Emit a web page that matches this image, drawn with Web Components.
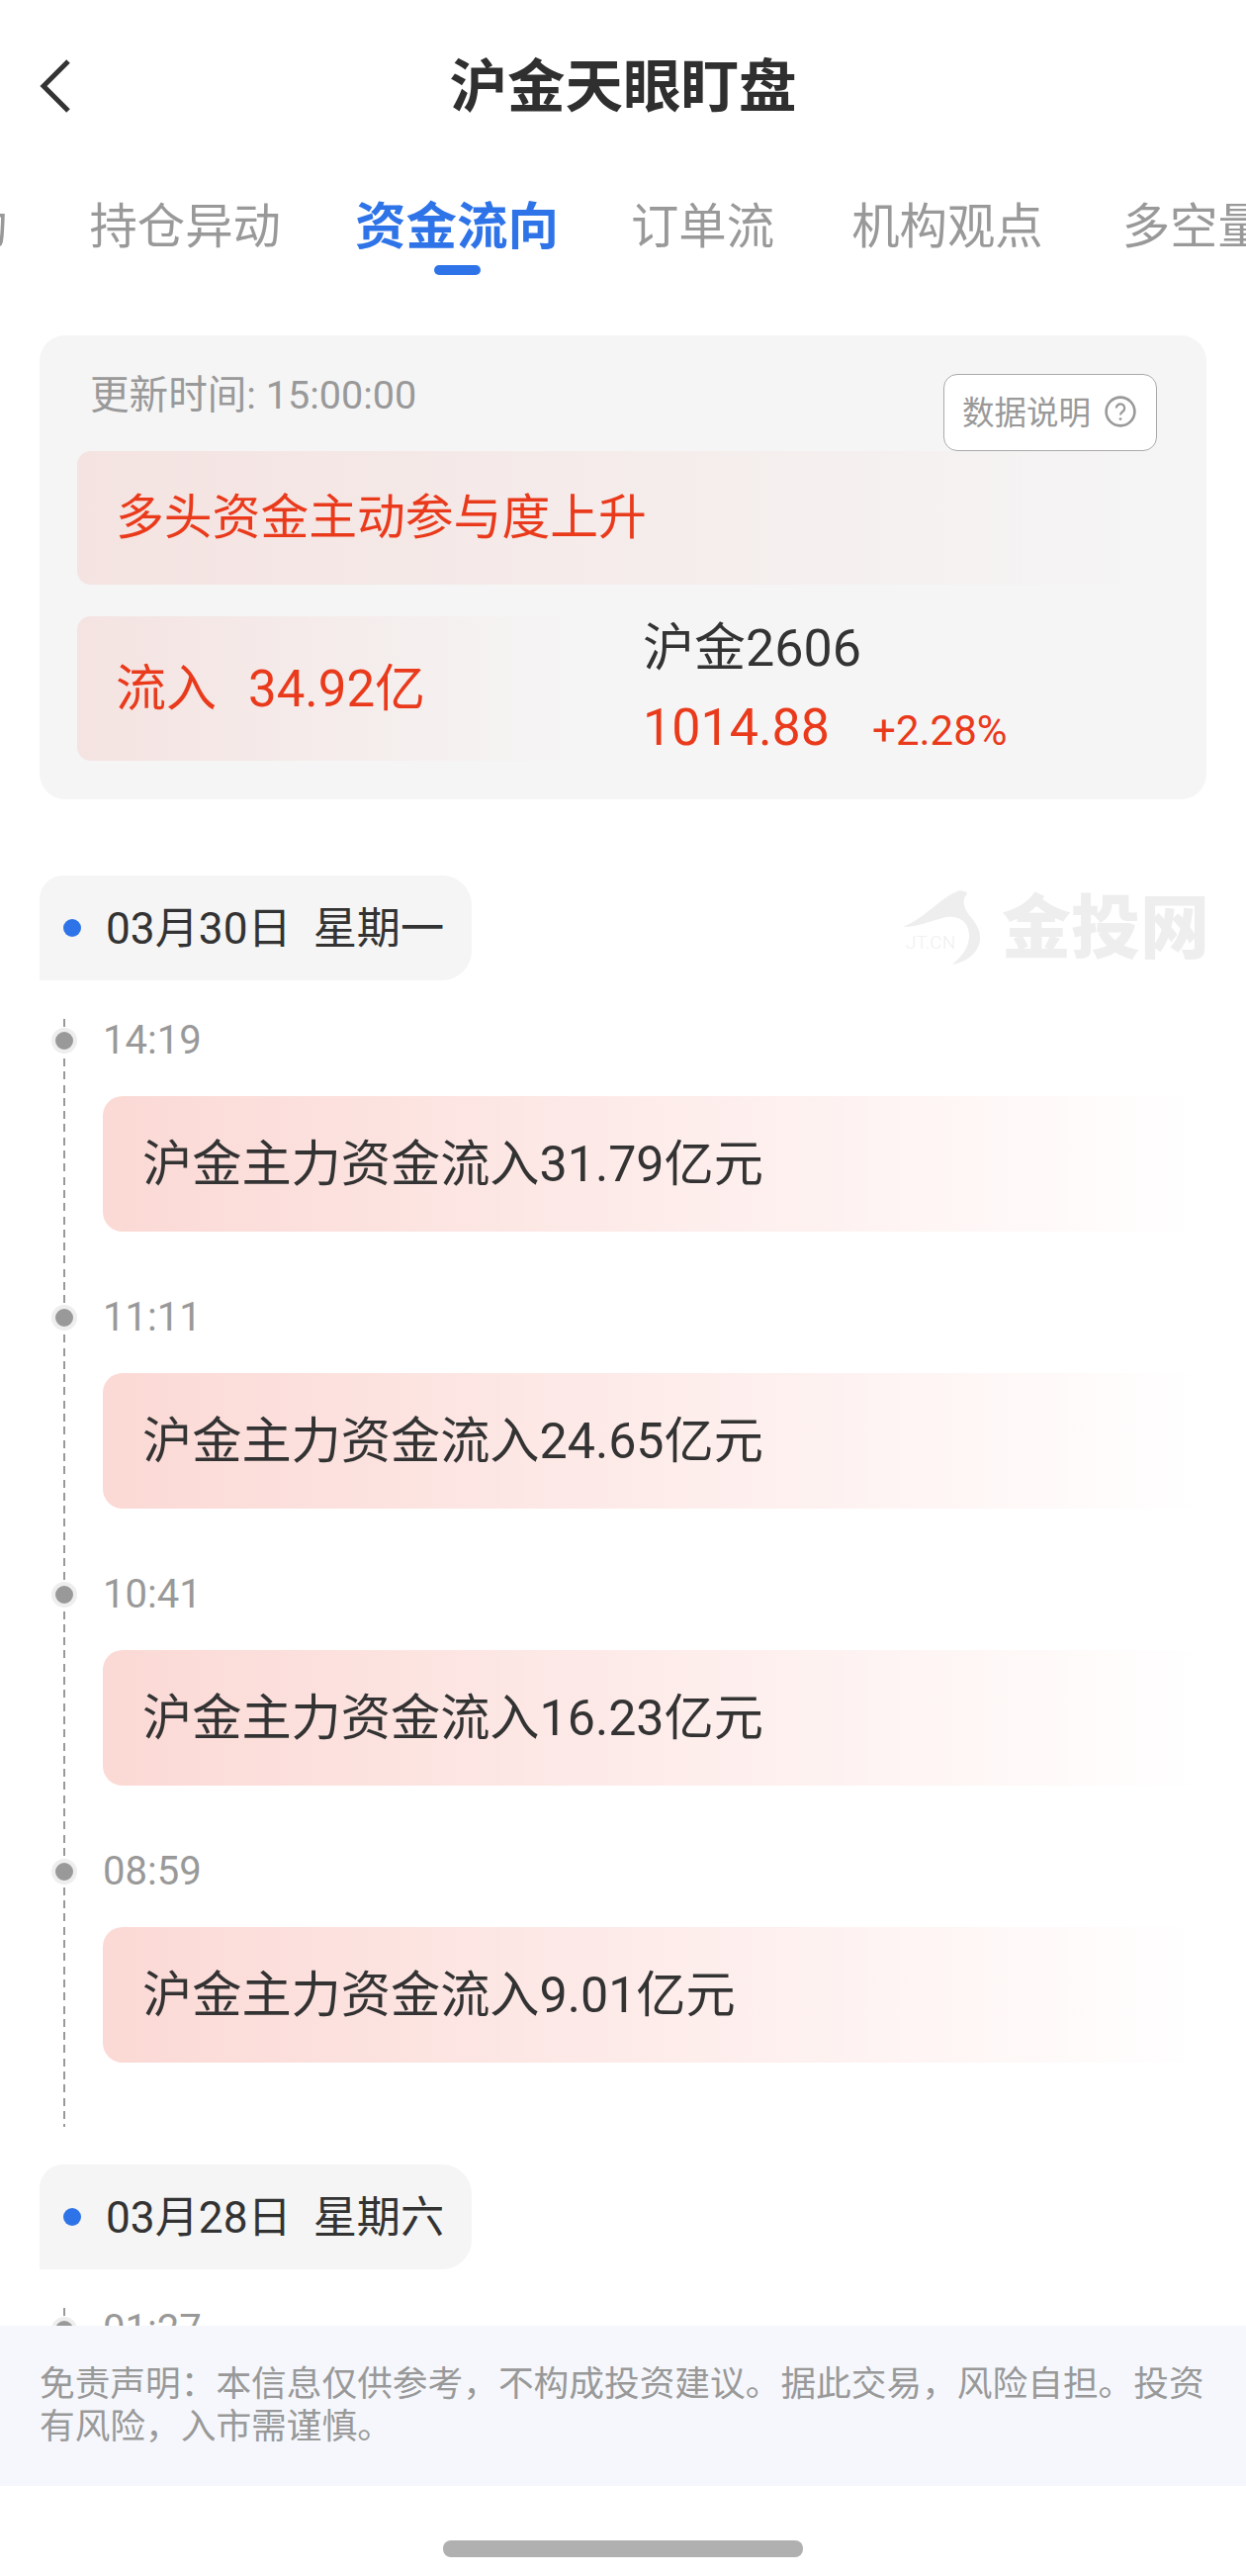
<!DOCTYPE html>
<html lang="zh-CN">
<head>
<meta charset="utf-8">
<title>沪金天眼盯盘</title>
<style>
  html, body { margin: 0; padding: 0; background: #fff; }
  body { font-family: Roboto, "Noto Sans CJK SC", sans-serif; color: #333; }
</style>
</head>
<body>
<app-shell>
  <page-header>沪金天眼盯盘</page-header>
  <tab-strip>
    <tab-item style="margin-left:-41px">动</tab-item>
    <tab-item style="margin-left:83px">持仓异动</tab-item>
    <tab-item active style="margin-left:75px">资金流向</tab-item>
    <tab-item style="margin-left:73px">订单流</tab-item>
    <tab-item style="margin-left:78px">机构观点</tab-item>
    <tab-item style="margin-left:80px">多空量</tab-item>
  </tab-strip>
  <flow-feed>
    <summary-card></summary-card>
    <jt-watermark></jt-watermark>
    <date-pill>03月30日&nbsp; 星期一</date-pill>
    <flow-group>
      <flow-entry time="14:19">沪金主力资金流入31.79亿元</flow-entry>
      <flow-entry time="11:11">沪金主力资金流入24.65亿元</flow-entry>
      <flow-entry time="10:41">沪金主力资金流入16.23亿元</flow-entry>
      <flow-entry time="08:59">沪金主力资金流入9.01亿元</flow-entry>
    </flow-group>
    <date-pill>03月28日&nbsp; 星期六</date-pill>
    <flow-group>
      <flow-entry time="01:27"></flow-entry>
    </flow-group>
  </flow-feed>
  <disclaimer-bar>免责声明&#xFF1A;本信息仅供参考&#xFF0C;不构成投资建议。据此交易&#xFF0C;风险自担。投资有风险&#xFF0C;入市需谨慎。</disclaimer-bar>
  <home-bar></home-bar>
</app-shell>

<script>
  class AppShell extends HTMLElement {
    constructor() {
      super();
      this.attachShadow({mode: 'open'}).innerHTML = `
        <style>
          :host {
            display: flex;
            flex-direction: column;
            width: 1260px;
            height: 2604px;
            overflow: hidden;
            background: #fff;
          }
        </style>
        <slot></slot>
      `;
    }
  }

  class PageHeader extends HTMLElement {
    constructor() {
      super();
      this.attachShadow({mode: 'open'}).innerHTML = `
        <style>
          :host {
            display: grid;
            grid-template-columns: 1fr auto 1fr;
            align-items: center;
            height: 174px;
            flex: none;
          }
          svg { display: block; margin-left: 40px; }
          h1 {
            margin: 2px 0 0;
            font-size: 58.5px;
            line-height: 70px;
            font-weight: 700;
            color: #2f2f2f;
          }
        </style>
        <svg width="34" height="56" viewBox="0 0 34 56" fill="none">
          <path d="M29 3 L4 28 L29 53" stroke="#333" stroke-width="5"/>
        </svg>
        <h1><slot></slot></h1>
        <span></span>
      `;
    }
  }

  class TabStrip extends HTMLElement {
    constructor() {
      super();
      this.attachShadow({mode: 'open'}).innerHTML = `
        <style>
          :host {
            display: flex;
            flex: none;
            height: 165px;
            align-items: flex-start;
            overflow: hidden;
            white-space: nowrap;
          }
        </style>
        <slot></slot>
      `;
    }
  }

  class TabItem extends HTMLElement {
    constructor() {
      super();
      this.attachShadow({mode: 'open'}).innerHTML = `
        <style>
          :host {
            display: block;
            flex: none;
            position: relative;
            height: 102px;
            padding-top: 26px;
            font-size: 48.4px;
            line-height: 60px;
            color: #999;
          }
          :host([active]) {
            font-size: 51.5px;
            font-weight: 700;
            color: #2e74e8;
          }
          :host([active])::after {
            content: "";
            position: absolute;
            left: 50%;
            top: 94px;
            width: 47px;
            height: 10px;
            margin-left: -23px;
            border-radius: 5px;
            background: #2e74e8;
          }
        </style>
        <slot></slot>
      `;
    }
  }

  class FlowFeed extends HTMLElement {
    constructor() {
      super();
      this.attachShadow({mode: 'open'}).innerHTML = `
        <style>
          :host {
            display: block;
            position: relative;
            flex: 1;
            min-height: 0;
            overflow: hidden;
            padding: 0 40px;
          }
        </style>
        <slot></slot>
      `;
    }
  }

  class SummaryCard extends HTMLElement {
    constructor() {
      super();
      this.attachShadow({mode: 'open'}).innerHTML = `
        <style>
          :host {
            display: block;
            box-sizing: border-box;
            height: 469px;
            padding: 0 38px 39px;
            border-radius: 26px;
            background: #f5f5f5;
          }
          .head {
            display: flex;
            justify-content: space-between;
            align-items: flex-start;
            height: 117px;
            padding: 0 12px 0 13px;
          }
          .updated {
            margin-top: 41px;
            font-size: 39.6px;
            line-height: 40px;
            color: #999;
          }
          .help {
            display: flex;
            align-items: center;
            gap: 14px;
            box-sizing: border-box;
            width: 216px;
            height: 78px;
            margin-top: 39px;
            padding: 0 0 2px 18px;
            border: 1.5px solid #aaa;
            border-radius: 14px;
            background: #fff;
            font-size: 32.5px;
            color: #999;
          }
          .help span { margin-bottom: 3px; }
          .help svg { display: block; flex: none; }
          .signal {
            display: flex;
            align-items: center;
            box-sizing: border-box;
            height: 135px;
            padding: 0 0 10px 39px;
            border-radius: 14px;
            background: linear-gradient(90deg, #f4e3e1, rgba(244, 227, 225, 0));
            font-size: 48.8px;
            color: #ea3a1c;
          }
          .row {
            display: flex;
            height: 146px;
            margin-top: 32px;
          }
          .inflow {
            display: flex;
            align-items: center;
            gap: 32px;
            box-sizing: border-box;
            width: 512px;
            padding: 0 0 9px 39px;
            border-radius: 14px;
            background: linear-gradient(90deg, #f4e3e1, rgba(244, 227, 225, 0));
            font-size: 51px;
            color: #ea3a1c;
          }
          .quote { margin-left: 60px; }
          .name {
            font-size: 52px;
            line-height: 62px;
            color: #333;
            margin-top: 2px;
          }
          .price {
            display: flex;
            align-items: baseline;
            gap: 43px;
            margin-top: 15px;
            line-height: 68px;
            font-size: 52px;
            color: #ea3a1c;
          }
          .pct { font-size: 42px; }
        </style>
        <div class="head">
          <div class="updated">更新时间: 15:00:00</div>
          <div class="help"><span>数据说明</span>
            <svg width="32" height="32" viewBox="0 0 32 32" fill="none" stroke="#999" stroke-width="2.6">
              <circle cx="16" cy="16" r="14.4"/>
              <path d="M11.8 12.6a4.2 4.2 0 1 1 6.6 3.4c-1.5 1-2.4 1.8-2.4 3.6" stroke-width="2.2"/>
              <circle cx="16" cy="23.6" r="1.4" fill="#999" stroke="none"/>
            </svg>
          </div>
        </div>
        <div class="signal">多头资金主动参与度上升</div>
        <div class="row">
          <div class="inflow"><span>流入</span><span>34.92亿</span></div>
          <div class="quote">
            <div class="name">沪金2606</div>
            <div class="price"><span>1014.88</span><span class="pct">+2.28%</span></div>
          </div>
        </div>
      `;
    }
  }

  class JtWatermark extends HTMLElement {
    constructor() {
      super();
      this.attachShadow({mode: 'open'}).innerHTML = `
        <style>
          :host {
            position: absolute;
            left: 913px;
            top: 560px;
            width: 310px;
            height: 80px;
            display: flex;
            align-items: center;
            pointer-events: none;
          }
          .bird { position: relative; width: 100px; height: 80px; flex: none; }
          svg { display: block; }
          small {
            position: absolute;
            left: 3px;
            top: 44px;
            font-size: 19px;
            line-height: 20px;
            font-weight: 300;
            color: #f0f0f0;
          }
          b {
            font-size: 70px;
            line-height: 80px;
            font-weight: 900;
            color: #eeeeee;
            white-space: nowrap;
          }
        </style>
        <div class="bird">
          <svg width="100" height="80" viewBox="0 0 100 80">
            <path fill="#eee" d="M0 38 C22 30 40 6 58 1 L65 3 L64 6 C60 10 61 18 67 26 C78 38 82 50 74 62 C68 70 60 74 50 76 C62 66 70 54 66 40 C62 28 50 26 40 29 C26 33 14 38 0 38 Z"/>
          </svg>
          <small>JT.CN</small>
        </div>
        <b>金投网</b>
      `;
    }
  }

  class DatePill extends HTMLElement {
    constructor() {
      super();
      this.attachShadow({mode: 'open'}).innerHTML = `
        <style>
          :host {
            display: flex;
            align-items: center;
            gap: 25px;
            box-sizing: border-box;
            width: 437px;
            height: 106px;
            padding: 0 0 7px 24px;
            border-radius: 24px 30px 30px 0;
            background: #f5f5f5;
            font-size: 44.2px;
            color: #333;
            white-space: nowrap;
          }
          i {
            width: 18px;
            height: 18px;
            flex: none;
            margin-top: 7px;
            border-radius: 50%;
            background: #2e74e8;
          }
        </style>
        <i></i><span><slot></slot></span>
      `;
    }
    connectedCallback() {
      this.style.marginTop = this.previousElementSibling.localName == 'flow-group' ? '38px' : '77px';
    }
  }

  class FlowGroup extends HTMLElement {
    constructor() {
      super();
      this.attachShadow({mode: 'open'}).innerHTML = `
        <style>
          :host {
            display: block;
            position: relative;
            margin-top: 39px;
          }
          :host::before {
            content: "";
            position: absolute;
            left: 24px;
            top: 0;
            bottom: 0;
            width: 2px;
            background: repeating-linear-gradient(180deg, #999 0 8px, transparent 8px 13.3px);
          }
        </style>
        <slot></slot>
      `;
    }
  }

  class FlowEntry extends HTMLElement {
    constructor() {
      super();
      this.attachShadow({mode: 'open'}).innerHTML = `
        <style>
          :host {
            display: block;
            position: relative;
            box-sizing: border-box;
            height: 280px;
            padding-left: 64px;
          }
          .node {
            position: absolute;
            left: 12px;
            top: 9px;
            width: 18px;
            height: 18px;
            border: 4px solid #eee;
            border-radius: 50%;
            background: #999;
          }
          .time {
            font-size: 40px;
            line-height: 44px;
            color: #999;
          }
          .bar {
            display: flex;
            align-items: center;
            box-sizing: border-box;
            height: 137px;
            margin-top: 34px;
            padding: 0 0 10px 40px;
            border-radius: 20px 0 0 20px;
            background: linear-gradient(90deg, #fbd9d5, rgba(251, 217, 213, 0));
            font-size: 50.2px;
            color: #333;
          }
        </style>
        <div class="node"></div>
        <div class="time"></div>
        <div class="bar"><slot></slot></div>
      `;
    }
    connectedCallback() {
      this.shadowRoot.querySelector('.time').textContent = this.getAttribute('time');
    }
  }

  class DisclaimerBar extends HTMLElement {
    constructor() {
      super();
      this.attachShadow({mode: 'open'}).innerHTML = `
        <style>
          :host {
            display: block;
            flex: none;
            box-sizing: border-box;
            height: 162px;
            padding: 38px 38px 0 40px;
            background: #f5f7fc;
            font-size: 35.7px;
            line-height: 43px;
            color: #999;
          }
        </style>
        <slot></slot>
      `;
    }
  }

  class HomeBar extends HTMLElement {
    constructor() {
      super();
      this.attachShadow({mode: 'open'}).innerHTML = `
        <style>
          :host {
            display: block;
            flex: none;
            height: 91px;
          }
          div {
            width: 364px;
            height: 17px;
            margin: 55px auto 0;
            border-radius: 8px;
            background: #b0b0b0;
          }
        </style>
        <div></div>
      `;
    }
  }

  customElements.define('app-shell', AppShell);
  customElements.define('page-header', PageHeader);
  customElements.define('tab-strip', TabStrip);
  customElements.define('tab-item', TabItem);
  customElements.define('flow-feed', FlowFeed);
  customElements.define('summary-card', SummaryCard);
  customElements.define('jt-watermark', JtWatermark);
  customElements.define('date-pill', DatePill);
  customElements.define('flow-group', FlowGroup);
  customElements.define('flow-entry', FlowEntry);
  customElements.define('disclaimer-bar', DisclaimerBar);
  customElements.define('home-bar', HomeBar);
</script>
</body>
</html>
